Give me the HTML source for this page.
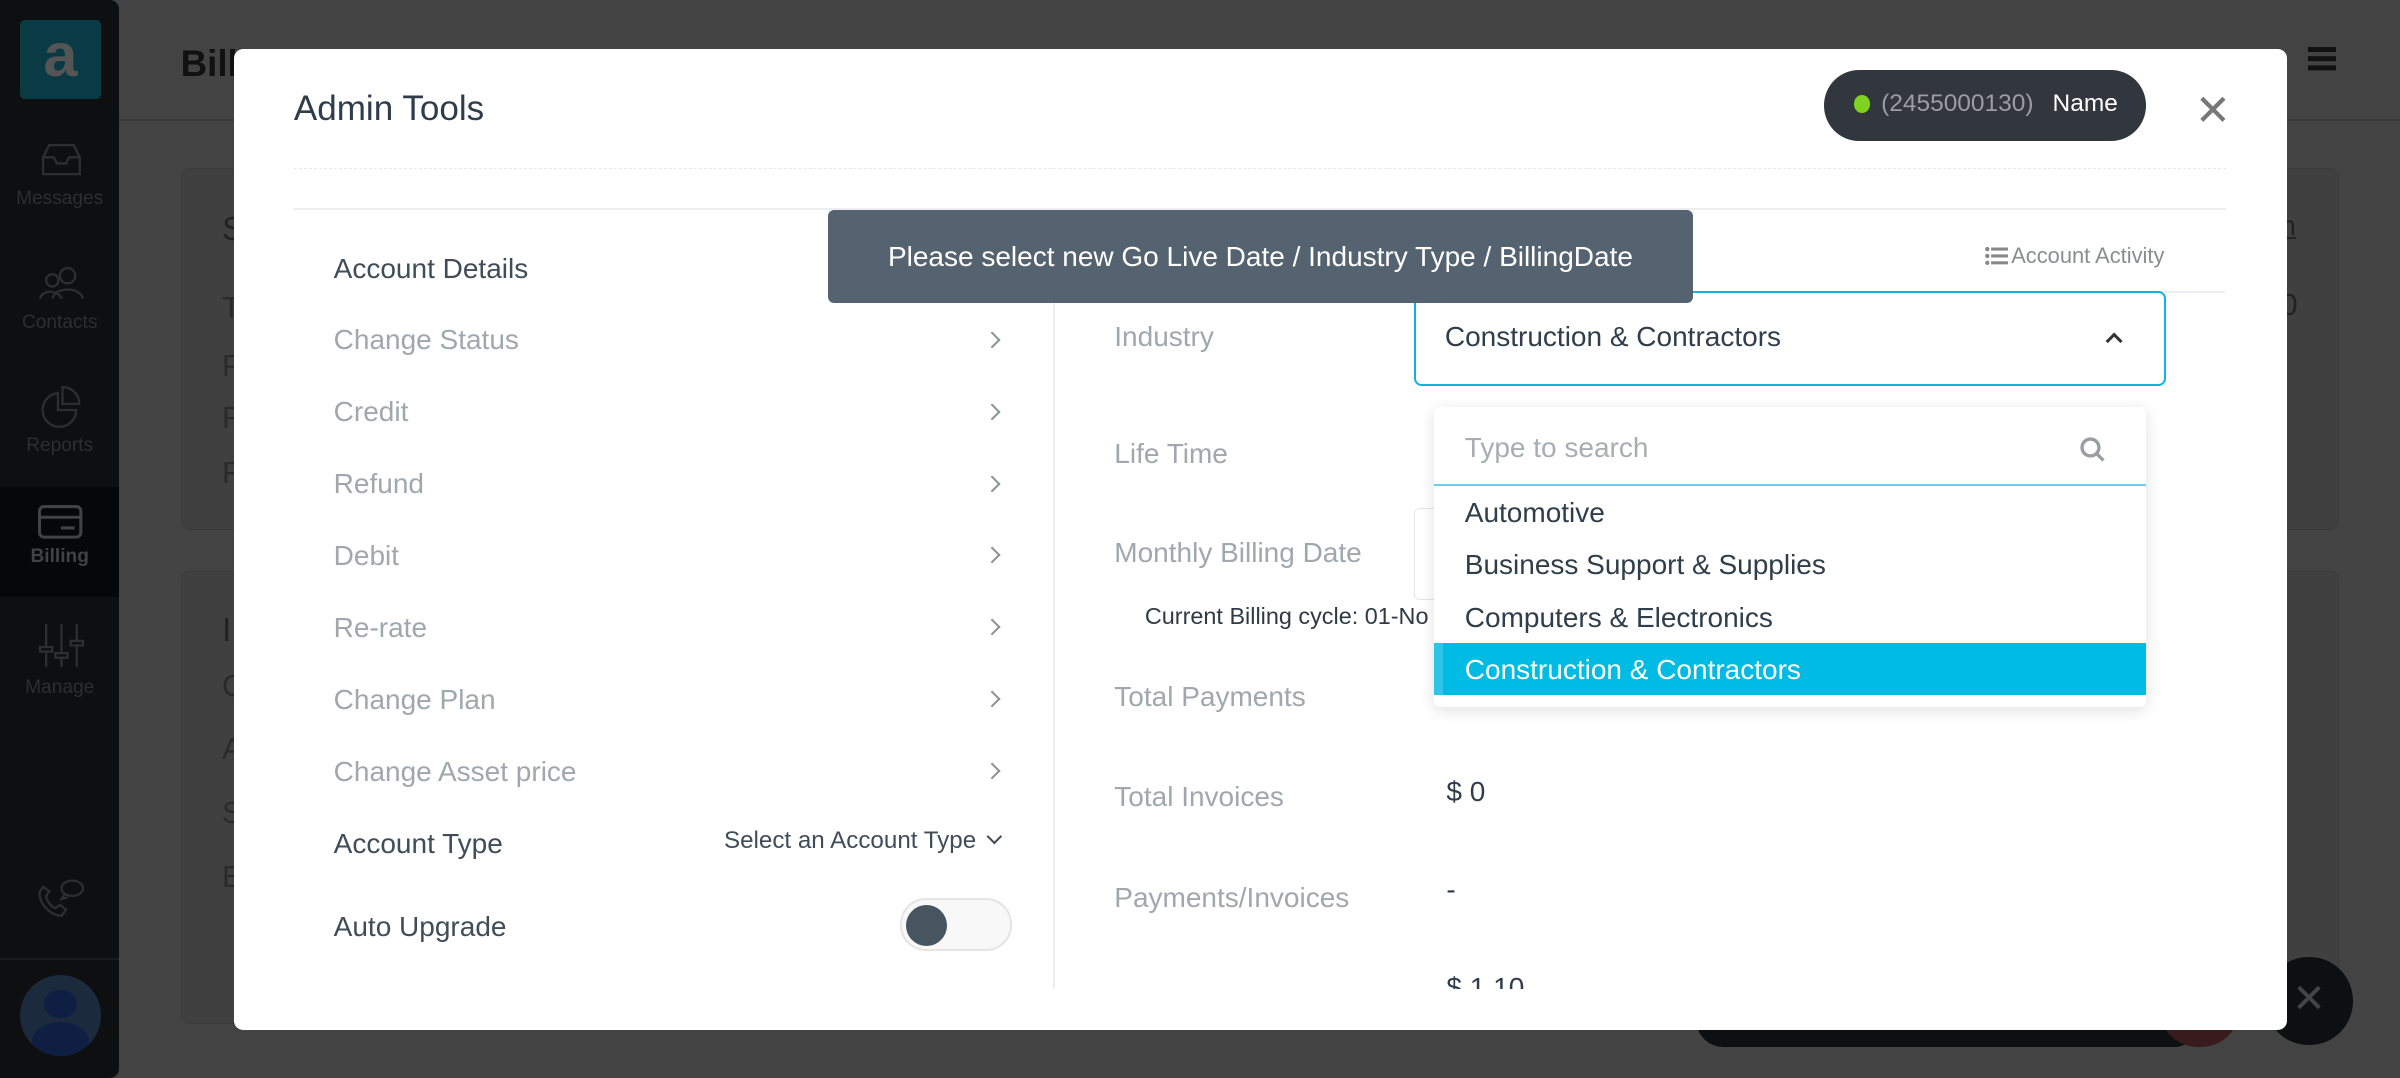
<!DOCTYPE html>
<html><head><meta charset="utf-8"><style>
*{margin:0;padding:0;box-sizing:border-box}
html,body{width:2400px;height:1078px;overflow:hidden;background:#444}
#r{width:1568px;height:704px;zoom:1.530612;position:relative;font-family:"Liberation Sans",sans-serif;background:#434343;overflow:hidden}
.a{position:absolute;white-space:nowrap}
.side{left:0;top:0;width:78px;height:704px;background:#0d0f11;border-radius:0 6px 6px 0}
.nl{width:78px;text-align:center;font-size:12.5px;color:#2c2f32;left:0}
.g{color:#a0a7ad;font-size:18.3px}
.d{color:#3f4d58;font-size:18.3px}
.chev{width:8px;height:8px;border-top:1.6px solid #8a9198;border-right:1.6px solid #8a9198;transform:rotate(45deg);left:644px}
.opt{left:957px;font-size:18.3px;color:#2f3e4a}
.bl{left:145px;font-size:20px;color:#2a2a2a}
</style></head><body><div id="r">
<!-- background page -->
<div class="a" style="left:118px;top:28px;font-size:24px;font-weight:bold;color:#111">Billing</div>
<div class="a" style="left:78px;top:78px;width:1490px;height:1px;background:#3a3a3a"></div>
<div class="a" style="left:118px;top:110px;width:1410px;height:236px;background:#404040;border:1px solid #3b3b3b;border-radius:6px"></div>
<div class="a" style="left:118px;top:373px;width:1410px;height:296px;background:#404040;border:1px solid #3b3b3b;border-radius:6px"></div>
<div class="a bl" style="top:138px;font-size:22px;color:#222">S</div>
<div class="a bl" style="top:190px">T</div><div class="a bl" style="top:228px">P</div><div class="a bl" style="top:262px">R</div><div class="a bl" style="top:298px">R</div>
<div class="a bl" style="top:400px;font-size:22px;color:#222">I</div>
<div class="a bl" style="top:437px">C</div><div class="a bl" style="top:478px">A</div><div class="a bl" style="top:520px">S</div><div class="a bl" style="top:562px">B</div>
<div class="a" style="left:1490px;top:137px;font-size:18px;color:#222;text-decoration:underline">n</div>
<div class="a" style="left:1490px;top:188px;font-size:20px;color:#222">0</div>
<div class="a" style="left:1508px;top:31px;width:18px;height:3px;background:#111;box-shadow:0 6px 0 #111,0 12px 0 #111"></div>
<div class="a" style="left:1108px;top:648px;width:330px;height:36px;background:#0d0f11;border-radius:18px"></div>
<div class="a" style="left:1412px;top:640px;width:50px;height:44px;background:#3a1b1d;border-radius:50%"></div>
<div class="a" style="left:1480px;top:625px;width:57px;height:58px;background:#0e0f10;border-radius:50%;color:#444;font-size:26px;text-align:center;line-height:56px">✕</div>
<!-- sidebar -->
<div class="a side"></div>
<div class="a" style="left:13px;top:13px;width:53px;height:52px;background:#0a3a44;border-radius:3px;color:#555;font-size:40px;font-weight:bold;text-align:center;line-height:46px">a</div>
<svg class="a" style="left:26px;top:93px" width="28" height="24" viewBox="0 0 28 24" fill="none" stroke="#2c2f32" stroke-width="1.5"><path d="M2 10 L6 2 H22 L26 10 V21 H2 Z M2 10 H9 L11 14 H17 L19 10 H26"/></svg>
<div class="a nl" style="top:123px">Messages</div>
<svg class="a" style="left:24px;top:173px" width="32" height="24" viewBox="0 0 32 24" fill="none" stroke="#2c2f32" stroke-width="1.5"><circle cx="10" cy="10" r="4"/><circle cx="20" cy="7" r="5"/><path d="M2 22c1-6 12-6 14 0M10 22c2-8 18-8 20 0"/></svg>
<div class="a nl" style="top:204px">Contacts</div>
<svg class="a" style="left:25px;top:251px" width="30" height="30" viewBox="0 0 30 30" fill="none" stroke="#2c2f32" stroke-width="1.5"><path d="M13 6A11 11 0 1 0 25 17H13Z M16 2V13H27A11 11 0 0 0 16 2Z"/></svg>
<div class="a nl" style="top:284px">Reports</div>
<div class="a" style="left:0;top:318px;width:78px;height:72px;background:#060708"></div>
<svg class="a" style="left:25px;top:330px" width="29" height="22" viewBox="0 0 29 22" fill="none" stroke="#404346" stroke-width="2"><rect x="1" y="1" width="27" height="20" rx="3"/><path d="M1 8H28M15 15H24"/></svg>
<div class="a nl" style="top:357px;color:#404346;font-weight:bold">Billing</div>
<svg class="a" style="left:24px;top:406px" width="32" height="32" viewBox="0 0 32 32" fill="none" stroke="#2c2f32" stroke-width="1.5"><path d="M6 2V30M16 2V30M26 2V30"/><rect x="2" y="17" width="8" height="3" fill="#0d0f11"/><rect x="12" y="21" width="8" height="3" fill="#0d0f11"/><rect x="22" y="13" width="8" height="3" fill="#0d0f11"/></svg>
<div class="a nl" style="top:442px">Manage</div>
<svg class="a" style="left:22px;top:572px" width="34" height="30" viewBox="0 0 34 30" fill="none" stroke="#2c2f32" stroke-width="1.5"><path d="M4 10c-2 6 6 16 14 16l3-4-4-3-3 2c-3-1-6-5-6-8l2-3-4-3z"/><ellipse cx="25" cy="8" rx="7" ry="5"/><path d="M20 12l-2 3 4-1"/></svg>
<div class="a" style="left:0;top:626px;width:78px;height:1px;background:#1a1c1e"></div>
<div class="a" style="left:13px;top:637px;width:53px;height:53px;border-radius:50%;background:#1c2a3e;overflow:hidden"><div class="a" style="left:16px;top:10px;width:21px;height:18px;border-radius:50%;background:#0f1f44"></div><div class="a" style="left:8px;top:31px;width:37px;height:26px;border-radius:50%;background:#0f1f44"></div></div>
<!-- modal -->
<div class="a" style="left:153px;top:32px;width:1341px;height:641px;background:#fff;border-radius:6px;overflow:hidden">
<div style="position:absolute;left:-153px;top:-32px;width:1568px;height:704px">
<div class="a" style="left:192px;top:58px;font-size:22.9px;color:#2e3d49">Admin Tools</div>
<div class="a" style="left:1192px;top:46px;width:210px;height:46px;background:#32363d;border-radius:23px"></div>
<div class="a" style="left:1211px;top:62px;width:11px;height:12px;border-radius:50%;background:#7ed321"></div>
<div class="a" style="left:1229px;top:59px;font-size:16px;color:#9a9ea3">(2455000130)</div>
<div class="a" style="left:1341px;top:59px;font-size:16px;color:#fff">Name</div>
<div class="a" style="left:1434px;top:56px;font-size:28px;color:#777">✕</div>
<div class="a" style="left:192px;top:110px;width:1262px;border-top:1px dashed #e6e8eb"></div>
<div class="a" style="left:192px;top:136px;width:1262px;height:1.5px;background:#eceef2"></div>
<div class="a" style="left:192px;top:646px;width:1262px;height:40px;background:#fff;z-index:5"></div>
<div class="a" style="left:688px;top:136px;width:1.5px;height:510px;background:#eceef2"></div>
<div class="a" style="left:688px;top:190px;width:766px;height:1.5px;background:#eceef2"></div>
<div class="a d" style="left:218px;top:165px">Account Details</div>
<div class="a g" style="left:218px;top:212px">Change Status</div><div class="a chev" style="top:218px"></div>
<div class="a g" style="left:218px;top:259px">Credit</div><div class="a chev" style="top:265px"></div>
<div class="a g" style="left:218px;top:306px">Refund</div><div class="a chev" style="top:312px"></div>
<div class="a g" style="left:218px;top:353px">Debit</div><div class="a chev" style="top:359px"></div>
<div class="a g" style="left:218px;top:400px">Re-rate</div><div class="a chev" style="top:406px"></div>
<div class="a g" style="left:218px;top:447px">Change Plan</div><div class="a chev" style="top:453px"></div>
<div class="a g" style="left:218px;top:494px">Change Asset price</div><div class="a chev" style="top:500px"></div>
<div class="a d" style="left:218px;top:541px">Account Type</div>
<div class="a" style="left:473px;top:540px;font-size:15.8px;color:#3f4d58">Select an Account Type</div>
<div class="a" style="left:646px;top:543px;width:7px;height:7px;border-right:1.4px solid #3f4d58;border-bottom:1.4px solid #3f4d58;transform:rotate(45deg)"></div>
<div class="a d" style="left:218px;top:595px">Auto Upgrade</div>
<div class="a" style="left:588px;top:587px;width:73px;height:34px;border-radius:17px;background:#f8f8f8;border:1.5px solid #e4e4e4"></div>
<div class="a" style="left:592px;top:591px;width:27px;height:27px;border-radius:50%;background:#465560"></div>
<!-- right -->
<svg class="a" style="left:1297px;top:161px" width="15" height="13" viewBox="0 0 15 13" fill="#888"><circle cx="1.5" cy="2" r="1.4"/><circle cx="1.5" cy="6.5" r="1.4"/><circle cx="1.5" cy="11" r="1.4"/><rect x="4" y="1" width="11" height="2"/><rect x="4" y="5.5" width="11" height="2"/><rect x="4" y="10" width="11" height="2"/></svg>
<div class="a" style="left:1314px;top:159px;font-size:14.3px;color:#8a8d90">Account Activity</div>
<div class="a g" style="left:728px;top:210px">Industry</div>
<div class="a g" style="left:728px;top:286px">Life Time</div>
<div class="a g" style="left:728px;top:351px">Monthly Billing Date</div>
<div class="a" style="left:924px;top:332px;width:30px;height:60px;border:1px solid #e4e6e8;border-radius:4px"></div>
<div class="a" style="left:748px;top:394px;font-size:15.3px;color:#2f3a44">Current Billing cycle: 01-No</div>
<div class="a g" style="left:728px;top:445px">Total Payments</div>
<div class="a g" style="left:728px;top:510px">Total Invoices</div>
<div class="a" style="left:945px;top:507px;font-size:18.3px;color:#2f3e4a">$ 0</div>
<div class="a g" style="left:728px;top:576px">Payments/Invoices</div>
<div class="a" style="left:945px;top:571px;font-size:18.3px;color:#2f3e4a">-</div>
<div class="a" style="left:945px;top:635px;font-size:18.3px;color:#2f3e4a">$ 1.10</div>
<div class="a" style="left:924px;top:190px;width:491px;height:62px;border:1.5px solid #0fb3dd;border-radius:5px"></div>
<div class="a" style="left:944px;top:210px;font-size:18.3px;color:#2f3e4a">Construction &amp; Contractors</div>
<div class="a" style="left:1377px;top:219px;width:8px;height:8px;border-left:2px solid #333;border-top:2px solid #333;transform:rotate(45deg)"></div>
<div class="a" style="left:937px;top:266px;width:465px;height:196px;background:#fff;border-radius:4px;box-shadow:0 2px 10px rgba(0,0,0,.12)"></div>
<div class="a" style="left:937px;top:316px;width:465px;height:1.5px;background:#6bd0ea"></div>
<div class="a" style="left:957px;top:282px;font-size:18.3px;color:#a8adb2">Type to search</div>
<svg class="a" style="left:1358px;top:285px" width="18" height="18" viewBox="0 0 18 18" fill="none" stroke="#9a9ea3" stroke-width="2.2"><circle cx="7.5" cy="7.5" r="5.5"/><path d="M11.5 11.5L16 16"/></svg>
<div class="a opt" style="top:325px">Automotive</div>
<div class="a opt" style="top:359px">Business Support &amp; Supplies</div>
<div class="a opt" style="top:393px">Computers &amp; Electronics</div>
<div class="a" style="left:937px;top:420px;width:465px;height:34px;background:#00bbe3;border-left:6px solid #2cc5e8"></div>
<div class="a opt" style="top:427px;color:#fff">Construction &amp; Contractors</div>
<div class="a" style="left:541px;top:137px;width:565px;height:61px;background:#556371;border-radius:4px;color:#fff;font-size:18.3px;text-align:center;line-height:61px">Please select new Go Live Date / Industry Type / BillingDate</div>
</div></div>
</div></body></html>
